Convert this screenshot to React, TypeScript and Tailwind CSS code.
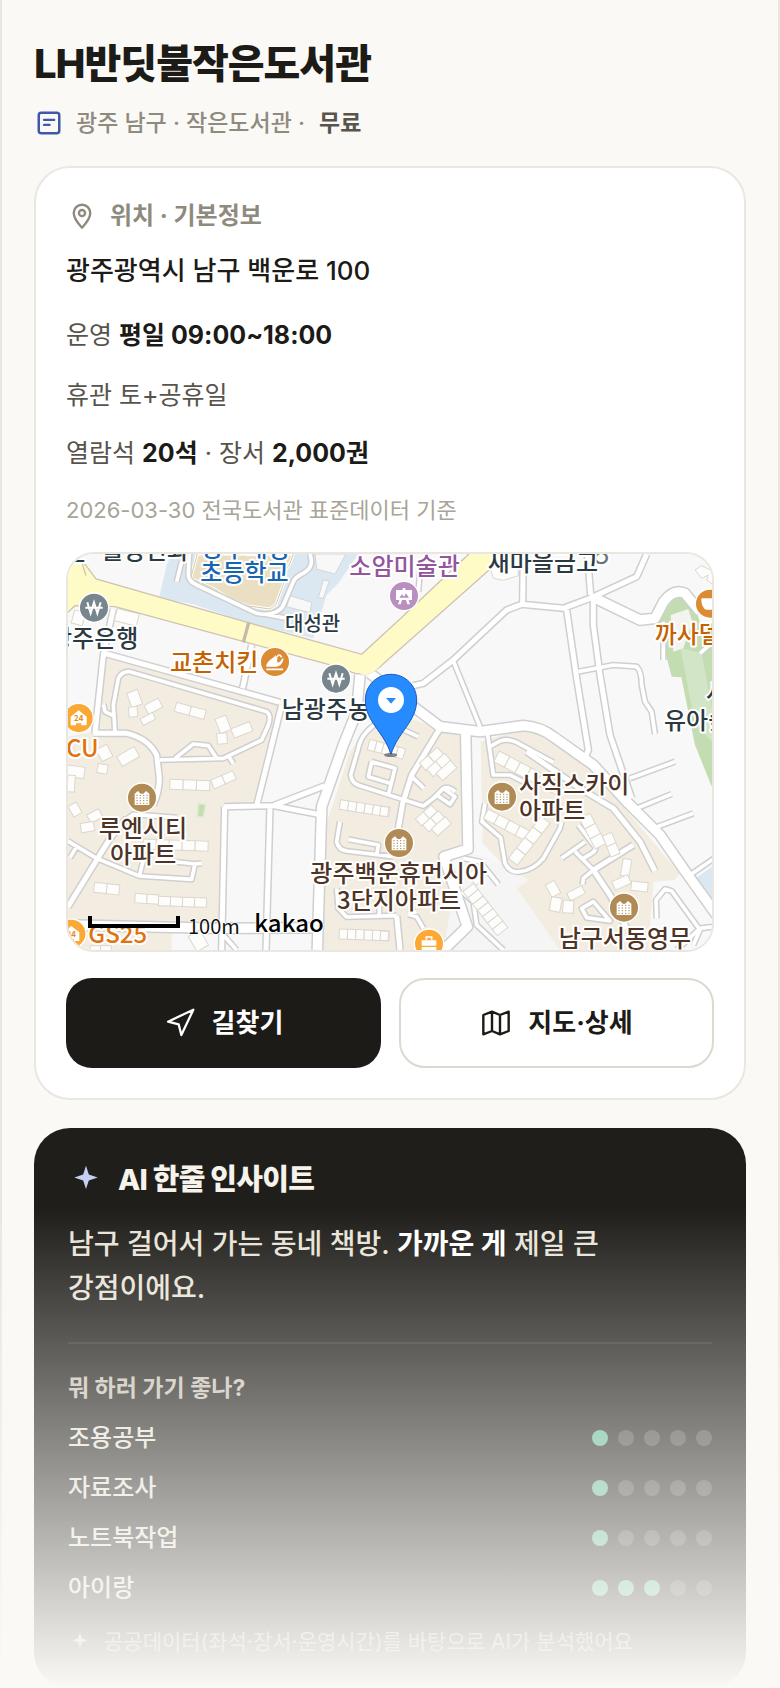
import type { ReactNode } from "react";
import { Navigation } from "lucide-react";

const PURPOSES = [
  { label: "조용공부", score: 1 },
  { label: "자료조사", score: 1 },
  { label: "노트북작업", score: 1 },
  { label: "아이랑", score: 3 },
];

// road centre lines, grouped by how wide they are drawn
const ROADS = [
  {
    width: 11,
    d: [
      "M165 560L160 480L175 400Q185 378 210 380L620 500Q635 510 625 540L605 585L490 640L300 645",
      "M345 640L400 597L445 602L470 640M505 632L520 656",
      "M130 478L135 500L160 512",
      "M24 888L110 940L238 993L395 1003L405 957L425 955M405 957L300 945M238 993L250 945M48 908L30 938",
      "M190 830L220 808L350 818",
      "M960 530Q905 560 895 610L872 690Q875 715 900 722L1050 770L1090 783L1120 760L1150 730L1185 755L1170 778L1130 750M1150 730Q1165 722 1185 740",
      "M840 830L830 890Q835 915 860 918L1000 935M865 883L955 900L950 930",
      "M830 1030L835 1090L860 1116L1010 1112M958 1080L958 1115",
      "M935 650L1005 670L985 750M935 650L925 695L990 715",
      "M1055 695L1092 730M1000 540L1075 575",
      "M1283 570L1300 690L1350 690L1400 715",
      "M1290 605L1320 588Q1345 580 1370 592L1480 652",
      "M1275 775L1266 830L1322 878L1335 955Q1350 985 1380 980Q1420 975 1450 940L1500 850L1505 830",
      "M1555 840L1605 905Q1610 915 1595 925L1570 940M1505 940L1575 890M1545 920L1600 975L1570 1000L1568 1018",
      "M1565 1090L1600 1070L1650 1128L1580 1118Z",
      "M1710 700L1845 650M1730 790L1835 747M1780 850L1900 805M1890 990L1970 935",
      "M1555 380L1660 360L1730 365Q1745 380 1745 420L1755 470L1775 500L1785 567",
      "M1180 348L1262 550",
      "M1210 940L1260 950L1315 1018M1205 1040L1240 1070L1250 1140L1330 1215M1045 1108L1070 1115L1090 1150M1045 1108L1070 1100",
      "M1790 1120L1788 1065L1815 1032L1835 1038L1920 1155L1900 1200M1850 1215L1920 1150L1960 1145",
      "M490 1170L530 1215M1810 230L1810 345M1080 80L1075 140M350 110L365 50M1920 325L1960 290",
      "M388 27L385 85Q383 108 410 120L590 205C620 212 660 205 670 180L700 110C710 80 770 90 750 27M620 208L690 222",
    ],
  },
  {
    width: 15,
    d: [
      "M130 324L660 472",
      "M160 192L130 330L105 565",
      "M575 300L548 430",
      "M665 480L590 782",
      "M100 565L200 565Q265 580 290 630L298 700Q298 740 280 780",
      "M492 785L640 782L795 722M640 782L775 808",
      "M494 785L485 1215M630 785L618 1215",
      "M200 820L150 880L24 1085",
      "M1140 550L1055 690L1028 775L1015 850",
      "M1010 1112L1020 1215",
      "M1060 422L1090 415L1180 345L1340 195L1385 178L1510 190L1590 160L1730 95L1760 27",
      "M1390 27L1388 175M1582 27L1592 150",
      "M1520 195L1550 400L1585 615L1570 650",
      "M1600 165L1600 240L1620 390L1650 570L1715 760",
      "M1400 620L1560 730L1660 790L1740 890L1785 978",
      "M1720 900L1600 975L1650 1050L1700 1150",
    ],
  },
  {
    width: 28,
    d: [
      "M900 390L890 500L850 600L785 785L772 1215",
      "M24 1140L480 1150L770 1148",
      "M1217 565L1224 912L1152 935L1222 1145L1150 1215",
      "M930 385L1060 485L1140 545L1260 560L1390 542Q1440 545 1480 575L1600 660L1700 770L1800 870L1880 985L1970 1110",
      "M1600 157L1740 225L1785 220L1810 172Q1840 130 1875 145L1920 200",
    ],
  },
];

// rows of tower blocks: n units of w x h, turned by r degrees
const BLOCKS = [
  { x: 200, y: 445, w: 34, h: 46, n: 1, r: -20 },
  { x: 252, y: 482, w: 48, h: 30, n: 1, r: -28 },
  { x: 205, y: 487, w: 26, h: 30, n: 1, r: -5 },
  { x: 240, y: 522, w: 42, h: 22, n: 1, r: -28 },
  { x: 350, y: 472, w: 46, h: 28, n: 2, r: 15 },
  { x: 465, y: 523, w: 34, h: 46, n: 1, r: -22 },
  { x: 512, y: 552, w: 60, h: 30, n: 1, r: -22 },
  { x: 470, y: 566, w: 30, h: 32, n: 1, r: -5 },
  { x: 170, y: 635, w: 60, h: 34, n: 1, r: -30 },
  { x: 108, y: 615, w: 36, h: 40, n: 1, r: -28 },
  { x: 115, y: 655, w: 30, h: 28, n: 1, r: 10 },
  { x: 24, y: 660, w: 52, h: 34, n: 1, r: 8 },
  { x: 24, y: 690, w: 22, h: 50, n: 1, r: 4 },
  { x: 330, y: 703, w: 40, h: 30, n: 3, r: 2 },
  { x: 452, y: 706, w: 36, h: 28, n: 2, r: -24 },
  { x: 80, y: 810, w: 40, h: 28, n: 1, r: -28 },
  { x: 60, y: 836, w: 40, h: 28, n: 1, r: -10 },
  { x: 24, y: 785, w: 28, h: 36, n: 1, r: -30 },
  { x: 250, y: 882, w: 39, h: 30, n: 5, r: 2 },
  { x: 104, y: 1012, w: 38, h: 30, n: 2, r: 6 },
  { x: 226, y: 1045, w: 36, h: 28, n: 2, r: 4 },
  { x: 296, y: 1054, w: 36, h: 28, n: 4, r: 2 },
  { x: 90, y: 1202, w: 32, h: 20, n: 2, r: 0 },
  { x: 172, y: 190, w: 68, h: 38, n: 1, r: 14 },
  { x: 44, y: 195, w: 34, h: 40, n: 1, r: 15 },
  { x: 385, y: 1175, w: 40, h: 52, n: 1, r: -30 },
  { x: 930, y: 583, w: 22, h: 32, n: 5, r: 15 },
  { x: 842, y: 764, w: 25, h: 29, n: 6, r: 9 },
  { x: 838, y: 1152, w: 25, h: 30, n: 6, r: 2 },
  { x: 962, y: 784, w: 24, h: 28, n: 1, r: 6 },
  { x: 962, y: 1158, w: 24, h: 28, n: 1, r: 4 },
  { x: 1078, y: 655, w: 36, h: 30, n: 2, r: -42 },
  { x: 1100, y: 673, w: 36, h: 30, n: 2, r: -42 },
  { x: 1128, y: 685, w: 58, h: 30, n: 1, r: -42 },
  { x: 1066, y: 822, w: 32, h: 28, n: 2, r: -42 },
  { x: 1088, y: 840, w: 32, h: 28, n: 2, r: -42 },
  { x: 1114, y: 852, w: 56, h: 28, n: 1, r: -42 },
  { x: 1318, y: 618, w: 36, h: 36, n: 6, r: 28 },
  { x: 1285, y: 792, w: 36, h: 32, n: 4, r: 28 },
  { x: 1345, y: 940, w: 40, h: 34, n: 4, r: -52 },
  { x: 1590, y: 805, w: 34, h: 36, n: 3, r: 62 },
  { x: 1655, y: 862, w: 34, h: 30, n: 2, r: 68 },
  { x: 1690, y: 940, w: 26, h: 52, n: 1, r: 10 },
  { x: 1655, y: 1010, w: 52, h: 28, n: 1, r: -24 },
  { x: 1715, y: 1008, w: 50, h: 28, n: 1, r: 6 },
  { x: 1456, y: 1020, w: 30, h: 42, n: 1, r: -28 },
  { x: 1475, y: 1055, w: 32, h: 42, n: 1, r: 10 },
  { x: 1510, y: 1065, w: 32, h: 38, n: 1, r: 4 },
  { x: 1520, y: 1045, w: 50, h: 26, n: 1, r: -28 },
  { x: 1225, y: 985, w: 24, h: 42, n: 1, r: -30 },
  { x: 1240, y: 1015, w: 24, h: 40, n: 7, r: 52 },
];

const PLACES = [
  { text: "월성연와", x: 122, y: 42, fill: "#2b3a42", size: 72 },
  { text: "느", x: 10, y: 52, fill: "#2b3a42", size: 72 },
  { text: "광주대성", x: 424, y: 35, fill: "#1565b0", size: 72 },
  { text: "초등학교", x: 421, y: 108, fill: "#1565b0", size: 72 },
  { text: "소암미술관", x: 868, y: 91, fill: "#94559d", size: 72 },
  { text: "ㅇ", x: 1590, y: 66, fill: "#6b7378", size: 72 },
  { text: "새마을금고", x: 1283, y: 78, fill: "#2b3a42", size: 72 },
  { text: "대성관", x: 675, y: 259, fill: "#2b3a42", size: 60 },
  { text: "광주은행", x: -30, y: 306, fill: "#2b3a42", size: 72 },
  { text: "교촌치킨", x: 330, y: 377, fill: "#c46200", size: 72 },
  { text: "남광주농협", x: 665, y: 518, fill: "#2b3a42", size: 72 },
  { text: "CU", x: 18, y: 637, fill: "#e0730d", size: 72 },
  { text: "까사델", x: 1784, y: 294, fill: "#c46200", size: 72 },
  { text: "사", x: 1938, y: 468, fill: "#2b3a42", size: 72 },
  { text: "유아숲", x: 1812, y: 551, fill: "#2b3a42", size: 72 },
  { text: "루엔시티", x: 116, y: 876, fill: "#4d3426", size: 72 },
  { text: "아파트", x: 150, y: 955, fill: "#4d3426", size: 72 },
  { text: "사직스카이", x: 1377, y: 743, fill: "#4d3426", size: 72 },
  { text: "아파트", x: 1377, y: 821, fill: "#4d3426", size: 72 },
  { text: "광주백운휴먼시아", x: 751, y: 1011, fill: "#4d3426", size: 72 },
  { text: "3단지아파트", x: 831, y: 1091, fill: "#4d3426", size: 72 },
  { text: "남구서동영무", x: 1496, y: 1207, fill: "#4d3426", size: 72 },
  { text: "GS25", x: 85, y: 1194, fill: "#e0730d", size: 72 },
];

function Badge({ x, y, fill, children }: { x: number; y: number; fill: string; children: ReactNode }) {
  return (
    <g transform={`translate(${x} ${y})`}>
      <circle r="44" fill={fill} stroke="#fff" strokeWidth="4" />
      {children}
    </g>
  );
}

function Apartment({ x, y }: { x: number; y: number }) {
  return (
    <Badge x={x} y={y} fill="#b08b56">
      <path d="M-22 22V-12L-12 -20L-4 -12H4L12 -20L22 -12V22Z" fill="#fff" />
      <path d="M-17 -7H17M-17 1H17M-17 9H17M-17 17H17" stroke="#b08b56" strokeWidth="3" strokeDasharray="4 6" />
    </Badge>
  );
}

function Bank({ x, y }: { x: number; y: number }) {
  return (
    <Badge x={x} y={y} fill="#76868c">
      <path d="M-20 -16L-10 17L0 -16L10 17L20 -16M-26 0H26" fill="none" stroke="#fff" strokeWidth="6" />
    </Badge>
  );
}

function Store({ x, y }: { x: number; y: number }) {
  return (
    <Badge x={x} y={y} fill="#fba834">
      <path d="M-24 22V-4L0 -23L24 -4V22H8V16H-8V22Z" fill="#fff" />
      <text x="0" y="9" textAnchor="middle" fontSize="24" fontWeight="700" fill="#e98c14">24</text>
    </Badge>
  );
}

function LibraryMap() {
  return (
    <svg
      viewBox="24 27 1932 1188"
      preserveAspectRatio="xMidYMid slice"
      className="block h-full w-full font-['Noto_Sans_CJK_KR',sans-serif]"
      role="img"
      aria-label="도서관 주변 지도"
    >
      <rect x="24" y="27" width="1932" height="1188" fill="#f8f8f8" />

      {/* school, parks and apartment grounds */}
      <path d="M335 27L320 60L297 160L400 178L560 232L760 280L800 150L835 115L895 27Z" fill="#dce8f1" />
      <path d="M412 27L392 100L460 130L505 160L560 182L630 192L648 178L675 105L666 88L688 60L700 27Z" fill="#eadfc2" stroke="#fff" strokeWidth="9" />
      <path d="M412 27L392 100L460 130L505 160L560 182L630 192L648 178L675 105L666 88L688 60L700 27" fill="none" stroke="#d9c9a3" strokeWidth="3" />
      <path d="M765 27L770 72L825 87L858 27ZM790 105L808 108L790 160L775 158ZM690 152L755 172L750 203L680 185Z" fill="#f8f8f8" stroke="#d5d5d5" strokeWidth="3" />
      <path d="M135 330L665 480L590 780L488 785L480 1215L24 1215V575L100 560Z" fill="#f3ede1" />
      <path d="M335 1150H480V1215H335Z" fill="#f8f8f8" />
      <path d="M925 540L985 500L1140 550L1205 565V905L1140 930L1200 1150L1120 1215H780L785 880L870 620Z" fill="#f3ede1" />
      <path d="M1262 590L1390 552L1480 580L1600 680L1860 985L1845 1005L1780 1010L1765 1215H1490L1370 1030L1405 1005L1330 960L1268 895Z" fill="#f3ede1" />
      <path d="M1205 910L1330 960L1405 1005L1370 1030L1500 1215H1150Z" fill="#f5f5f5" />
      <path d="M1795 220Q1820 160 1860 155Q1910 180 1920 235L1960 270V735L1945 700L1905 600L1864 397L1835 395L1800 260Z" fill="#c3dcb2" />
      <path d="M1862 310L1925 325L1956 490V590L1905 540Z" fill="#d3e5c7" />
      <path d="M1832 210L1885 192L1897 230L1870 310L1840 320Z" fill="#f2f4ef" />
      <path d="M1900 1005L1956 965V1090Z" fill="#dce8f1" />
      <path d="M415 775L437 778L430 817L412 814Z" fill="#c3dcb2" stroke="#dfecd3" strokeWidth="5" />

      {/* side streets: grey casing first, then the white surface */}
      <g fill="none" stroke="#cfcfcf" strokeLinejoin="round">
        {ROADS.map((road) => (
          <path key={road.width} d={road.d.join("")} strokeWidth={road.width + 9} />
        ))}
      </g>
      <g fill="none" stroke="#fff" strokeLinejoin="round">
        {ROADS.map((road) => (
          <path key={road.width} d={road.d.join("")} strokeWidth={road.width} />
        ))}
      </g>

      <g fill="#fdfdfc" stroke="#dcd7ce" strokeWidth="3">
        {BLOCKS.map((b, i) => (
          <g key={i} transform={`translate(${b.x} ${b.y}) rotate(${b.r})`}>
            {Array.from({ length: b.n }, (_, k) => (
              <rect key={k} x={k * b.w} width={b.w} height={b.h} />
            ))}
          </g>
        ))}
        <path d="M1290 67L1300 100L1330 106L1375 92V67ZM1905 75L1925 62L1960 80V120L1940 105L1945 90L1925 100Z" />
      </g>

      {/* main road */}
      <path
        d="M20 40L62 40L108 102L565 233L905 328L1020 222L1232 22H1347L960 365Q930 392 885 385L830 365L560 292L165 185L45 182L20 205Z"
        fill="#fffbc7"
        stroke="#cfc3b3"
        strokeWidth="4"
      />
      <path d="M905 345L895 383Q930 400 965 358L930 330Z" fill="#fffbc7" />
      <path d="M566 233L550 292" stroke="#c6b8aa" strokeWidth="10" />
      <path d="M62 40L78 92" stroke="#cfc3b3" strokeWidth="4" />

      <g fontWeight="500" stroke="#fff" strokeWidth="12" strokeLinejoin="round" style={{ paintOrder: "stroke" }}>
        {PLACES.map((place, i) => (
          <text key={i} x={place.x} y={place.y} fill={place.fill} fontSize={place.size}>{place.text}</text>
        ))}
      </g>

      <Bank x={102} y={188} />
      <Bank x={828} y={401} />
      <Store x={56} y={519} />
      <Store x={34} y={1166} />
      <Apartment x={246} y={758} />
      <Apartment x={1017} y={894} />
      <Apartment x={1326} y={755} />
      <Apartment x={1692} y={1088} />
      <Badge x={645} y={351} fill="#dc8b35">
        <path d="M-26 9C-20 -6 -4 -12 2 -20L8 -12C2 2 12 8 20 -8L26 -12C24 4 16 14 2 14H-26Z" fill="#fff" />
        <path d="M-26 22H24" stroke="#fff" strokeWidth="5" />
        <path d="M-4 -4Q-6 10 12 8M6 -16Q14 -26 20 -14" fill="none" stroke="#fff" strokeWidth="5" />
      </Badge>
      <Badge x={1032} y={153} fill="#b98fbf">
        <path d="M-24 -18H-4V-24H4V-18H24V12H14L18 25H10L6 12H-6L-10 25H-18L-14 12H-24Z" fill="#fff" />
        <path d="M-14 5L-6 -5L0 2L6 -8L15 5Z" fill="#b98fbf" />
      </Badge>
      <Badge x={1950} y={176} fill="#dc8b35">
        <path d="M-26 -16H30V6Q26 18 10 18H-10Q-26 16 -26 -16Z" fill="#fff" />
      </Badge>
      <Badge x={1107} y={1196} fill="#fba834">
        <path d="M-22 -10H22V6H-22ZM-22 10H22V24H-22Z" fill="#fff" />
        <path d="M-8 -12V-20H8V-12" fill="none" stroke="#fff" strokeWidth="5" />
      </Badge>

      {/* scale bar and provider mark */}
      <path d="M90 1113V1143H354V1113" fill="none" stroke="#000" strokeWidth="12" />
      <g stroke="#fff" strokeWidth="5" style={{ paintOrder: "stroke" }}>
        <text x="384" y="1167" fontSize="60" fill="#111">100m</text>
        <text x="583" y="1160" fontSize="72" fontWeight="500" fill="#000">kakao</text>
      </g>

      {/* library marker */}
      <ellipse cx="992" cy="630" rx="20" ry="6" fill="#555" opacity="0.7" />
      <path
        d="M993 388C950 388 916 422 916 465C916 530 972 560 993 628C1014 560 1070 530 1070 465C1070 422 1036 388 993 388Z"
        fill="#258bff"
        stroke="#1859c4"
        strokeWidth="3"
      />
      <circle cx="993" cy="465" r="39" fill="#fff" />
      <path d="M978 459H1008L993 476Z" fill="#258bff" />
    </svg>
  );
}

function Spark({ className }: { className: string }) {
  return (
    <svg viewBox="0 0 24 24" fill="currentColor" className={className} aria-hidden="true">
      <path d="M12 2.500L13.900 8.300L19.800 10.300L13.900 12.300L12 18L10.100 12.300L4.200 10.300L10.100 8.300Z" />
    </svg>
  );
}

function LocationCard() {
  return (
    <section className="mt-[27px] rounded-[36px] border-2 border-[#e9e7e0] bg-white px-[30px] pt-8 pb-[30px]">
      <h2 className="flex items-center gap-3 text-[24px] leading-8 font-bold text-[#8f8a7e]">
        <svg viewBox="0 0 24 24" fill="none" stroke="currentColor" strokeWidth="1.8" strokeLinejoin="round" className="size-8" aria-hidden="true">
          <path d="M12 20.8C9 17.600 5.800 13.800 5.800 9.800a6.200 6.200 0 0 1 12.400 0C18.200 13.800 15 17.600 12 20.800Z" />
          <circle cx="12" cy="9.8" r="2.3" />
        </svg>
        위치 · 기본정보
      </h2>
      <p className="mt-[21px] text-[26px] leading-9 font-medium text-[#1c1b17]">광주광역시 남구 백운로 100</p>
      <div className="mt-7 text-[25px] leading-9 text-[#57544c]">
        <p>
          운영 <b className="text-[#1c1b17]">평일 09:00~18:00</b>
        </p>
        <p className="mt-6">휴관 토+공휴일</p>
        <p className="mt-[22px]">
          열람석 <b className="text-[#1c1b17]">20석</b> · 장서 <b className="text-[#1c1b17]">2,000권</b>
        </p>
      </div>
      <p className="mt-[23px] text-[22px] leading-8 text-[#a8a497]">2026-03-30 전국도서관 표준데이터 기준</p>

      <div className="mt-[26px] h-[400px] overflow-hidden rounded-[28px] border-2 border-[#e9e7e0]">
        <LibraryMap />
      </div>

      <div className="mt-[26px] grid grid-cols-2 gap-[18px] text-[26px] leading-9 font-bold">
        <button type="button" className="flex h-[90px] items-center justify-center gap-4 rounded-[26px] bg-[#1c1b17] text-white">
          <Navigation size={32} strokeWidth={1.7} />
          길찾기
        </button>
        <button type="button" className="flex h-[90px] items-center justify-center gap-4 rounded-[26px] border-2 border-[#dcd9d0] bg-white text-[#1c1b17]">
          <svg viewBox="0 0 24 24" fill="none" stroke="currentColor" strokeWidth="1.8" strokeLinejoin="round" className="size-8" aria-hidden="true">
            <path d="M2.5 6L9 3.5L15 6L21.5 3.5V18L15 20.5L9 18L2.5 20.5ZM9 3.5V18M15 6V20.5" />
          </svg>
          지도·상세
        </button>
      </div>
    </section>
  );
}

function InsightCard() {
  return (
    <section className="mt-7 rounded-[36px] bg-[#1f1e1a] px-[34px] pt-8 pb-[30px]">
      <h2 className="flex items-center gap-[14px] text-[29px] leading-10 font-extrabold tracking-tight text-[#f5f3ec]">
        <Spark className="size-9 text-[#c3d0f2]" />
        AI 한줄 인사이트
      </h2>
      <p className="mt-[22px] text-[28px] leading-[44px] font-medium break-keep text-[#e8e3d8]">
        남구 걸어서 가는 동네 책방. <b className="text-white">가까운 게</b> 제일 큰 강점이에요.
      </p>

      <div className="mt-8 border-t-2 border-white/8 pt-7">
        <h3 className="text-[23px] leading-8 font-bold text-[#c7c1b4]">뭐 하러 가기 좋나?</h3>
        <ul className="mt-[9px]">
          {PURPOSES.map(({ label, score }) => (
            <li key={label} className="flex h-[50px] items-center justify-between text-[24px] font-medium text-[#e6e3d8]">
              {label}
              <span className="flex gap-[10px]" role="img" aria-label={`5점 중 ${score}점`}>
                {[1, 2, 3, 4, 5].map((n) => (
                  <span key={n} className={n <= score ? "size-4 rounded-full bg-[#60ba93]" : "size-4 rounded-full bg-white/18"} />
                ))}
              </span>
            </li>
          ))}
        </ul>
        <p className="mt-[13px] flex items-center gap-3 text-[21px] leading-8 text-[#a8a59c]">
          <Spark className="size-6 text-[#c0c2c6]" />
          공공데이터(좌석·장서·운영시간)를 바탕으로 AI가 분석했어요
        </p>
      </div>
    </section>
  );
}

export default function App() {
  return (
    <main className="relative min-h-screen border-x-2 border-[#e9e7e0] bg-[#faf9f6] px-8 pt-10 font-['Inter','Noto_Sans_CJK_KR',sans-serif]">
      <h1 className="text-[40px] leading-[48px] font-extrabold tracking-tight text-[#1c1b17]">LH반딧불작은도서관</h1>
      <p className="mt-[19px] flex items-center gap-3 text-[23px] leading-8 font-medium text-[#8f8a7e]">
        <svg viewBox="0 0 24 24" fill="none" stroke="#3f59a8" strokeWidth="2" strokeLinecap="round" className="size-[30px]" aria-hidden="true">
          <rect x="3.8" y="3.8" width="16.4" height="16.4" rx="2" />
          <path d="M8 9.500H16.200M8 13.500H12.500" strokeWidth="1.8" />
        </svg>
        <span>
          광주 남구 · 작은도서관 · <b className="ml-2 font-bold text-[#57544c]">무료</b>
        </span>
      </p>
      <LocationCard />
      <InsightCard />

      {/* preview fades out towards the bottom */}
      <div className="pointer-events-none absolute -inset-x-0.5 bottom-0 h-[480px] bg-linear-to-b from-[#faf9f6]/0 to-[#faf9f6]" />
    </main>
  );
}
